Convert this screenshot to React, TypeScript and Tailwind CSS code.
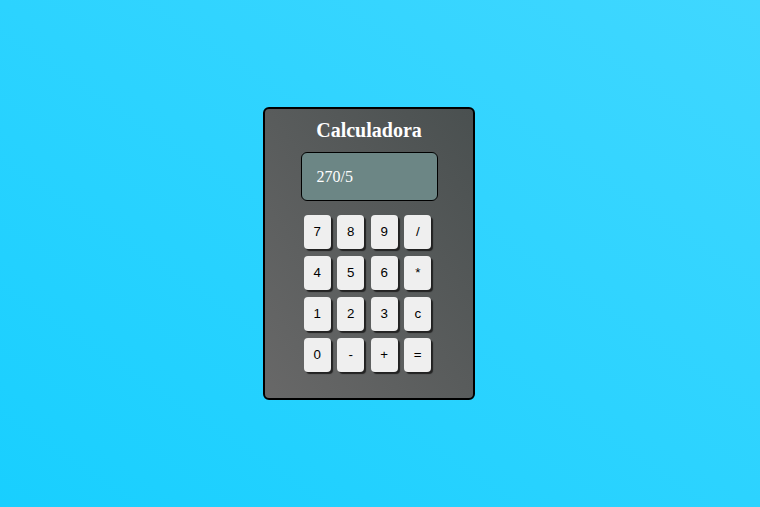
import React from 'react';

const keys = ['7', '8', '9', '/', '4', '5', '6', '*', '1', '2', '3', 'c', '0', '-', '+', '='];

const App: React.FC = () => {
    return (
        <div className="w-[760px] h-[507px] flex items-center justify-center pr-[22px] bg-[linear-gradient(to_top_right,#18cfff,#40d7ff)]">
            {/* Calculator body */}
            <div className="w-[212px] h-[293px] rounded-[6px] border-2 border-black bg-[linear-gradient(to_top_right,#686868,#4a5050)] flex flex-col items-center pt-[10px]">
                <h1 className="text-[20px] leading-[23px] font-bold text-white font-['Liberation_Serif',serif]">Calculadora</h1>

                <div className="mt-[10px] w-[137px] h-[49px] rounded-[6px] border border-black bg-[#6c8685] flex items-center pl-[15px]">
                    <span className="text-[16px] text-white font-['Liberation_Serif',serif]">270/5</span>
                </div>

                <div className="mt-[14px] grid grid-cols-4 gap-x-[6.5px] gap-y-[7px] ml-[-3px]">
                    {keys.map(k => (
                        <button
                            key={k}
                            className="w-[27px] h-[34px] rounded-[4px] bg-[#efefef] text-black text-[13.33px] font-['Liberation_Sans',sans-serif] shadow-[2px_2px_1px_#222]"
                        >
                            {k}
                        </button>
                    ))}
                </div>
            </div>
        </div>
    );
};

export default App;
